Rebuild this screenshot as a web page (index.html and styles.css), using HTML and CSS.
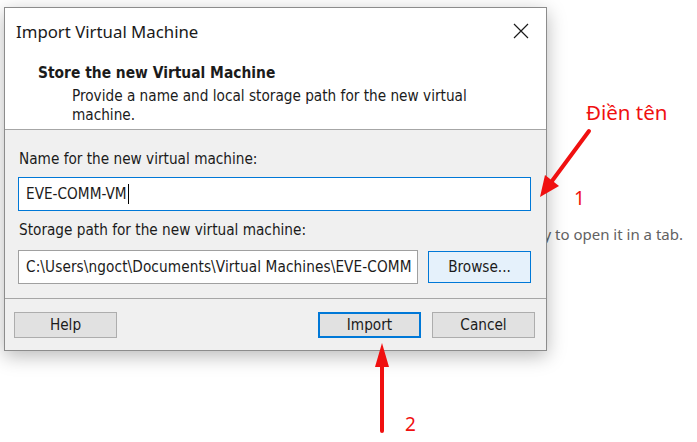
FILE: index.html
```html
<!DOCTYPE html>
<html>
<head>
<meta charset="utf-8">
<link rel="stylesheet" href="styles.css">
</head>
<body>
<div class="page">
  <div class="bg-text">Double-click a file or press Enter key to open it in a tab.</div>
  <div class="dialog">
    <div class="titlebar">
      <span class="title">Import Virtual Machine</span>
      <svg class="close" width="16" height="16" viewBox="0 0 16 16"><path d="M1 1L15 15M15 1L1 15" stroke="#1a1a1a" stroke-width="1.2" fill="none"/></svg>
    </div>
    <div class="header">
      <div class="h-title">Store the new Virtual Machine</div>
      <div class="h-desc">Provide a name and local storage path for the new virtual machine.</div>
    </div>
    <div class="body">
      <div class="label">Name for the new virtual machine:</div>
      <div class="input focused">EVE-COMM-VM<span class="caret"></span></div>
      <div class="label second">Storage path for the new virtual machine:</div>
      <div class="row">
        <div class="input path">C:\Users\ngoct\Documents\Virtual Machines\EVE-COMM</div>
        <div class="btn browse">Browse...</div>
      </div>
    </div>
    <div class="footer">
      <div class="btn">Help</div>
      <div class="spacer"></div>
      <div class="btn primary">Import</div>
      <div class="btn">Cancel</div>
    </div>
  </div>
  <svg class="annot" width="697" height="442" viewBox="0 0 697 442">
    <line x1="589" y1="131" x2="552" y2="181" stroke="#f01010" stroke-width="4" stroke-linecap="round"/>
    <polygon points="540,197 559,186 545,175" fill="#f01010"/>
    <line x1="382" y1="431" x2="382" y2="362" stroke="#f01010" stroke-width="4" stroke-linecap="round"/>
    <polygon points="382,343 389,367 375,367" fill="#f01010"/>
  </svg>
  <span class="note n-label">Điền tên</span>
  <span class="note n-1">1</span>
  <span class="note n-2">2</span>
</div>
</body>
</html>
```

FILE: styles.css
```css
html, body {
  margin: 0;
  padding: 0;
  background: #ffffff;
}
.page {
  position: relative;
  width: 697px;
  height: 442px;
  overflow: hidden;
  padding: 7px 0 0 4px;
  box-sizing: border-box;
  font-family: "DejaVu Sans Condensed", "DejaVu Sans", sans-serif;
  color: #1b1b1b;
}
.bg-text {
  position: absolute;
  right: 14px;
  top: 224px;
  font-family: "Noto Sans", sans-serif;
  font-size: 15px;
  color: #626262;
  white-space: nowrap;
}
.dialog {
  position: relative;
  z-index: 1;
  width: 543px;
  height: 344px;
  box-sizing: border-box;
  border: 1px solid #8c8c8c;
  background: #f0f0f0;
  box-shadow: 0 5px 18px rgba(0, 0, 0, 0.28);
  display: flex;
  flex-direction: column;
}
.titlebar {
  height: 46px;
  background: #fff;
  display: flex;
  align-items: center;
  justify-content: space-between;
  padding: 0 17px 0 11px;
  box-sizing: border-box;
}
.title {
  font-family: "Noto Sans", sans-serif;
  font-size: 16.8px;
  color: #1a1a1a;
}
.close {
  display: block;
}
.header {
  background: #fff;
  padding: 9px 0 4px 33px;
  border-bottom: 1px solid #a6a6a6;
  height: 76px;
  box-sizing: border-box;
}
.h-title {
  font-weight: bold;
  font-size: 15.4px;
  line-height: 20px;
}
.h-desc {
  margin: 4px 0 0 34px;
  font-size: 15.2px;
  line-height: 19px;
  width: 430px;
}
.body {
  padding: 20px 15px 14px 13px;
  border-bottom: 1px solid #a6a6a6;
}
.label {
  font-size: 15.2px;
  line-height: 18px;
  margin-left: 1px;
}
.label.second {
  margin-top: 10px;
}
.input {
  margin-top: 9px;
  height: 34px;
  box-sizing: border-box;
  border: 1px solid #9c9c9c;
  background: #fff;
  font-size: 15.2px;
  line-height: 32px;
  padding: 0 7px;
  white-space: nowrap;
  overflow: hidden;
  display: flex;
  align-items: center;
}
.input.focused {
  border-color: #0078d7;
}
.caret {
  display: inline-block;
  width: 1px;
  height: 20px;
  background: #000;
  margin-left: 1px;
}
.row {
  display: flex;
  align-items: center;
  gap: 10px;
  margin-top: 11px;
}
.row .input {
  margin-top: 0;
}
.input.path {
  width: 400px;
  flex: none;
  border-color: #a0a0a0;
  letter-spacing: 0.1px;
}
.btn {
  width: 103px;
  height: 26px;
  flex: none;
  box-sizing: border-box;
  border: 1px solid #adadad;
  background: #e1e1e1;
  font-size: 15.2px;
  display: flex;
  align-items: center;
  justify-content: center;
  color: #1b1b1b;
}
.btn.browse {
  height: 32px;
  background: #e5f1fb;
  border-color: #0078d7;
}
.btn.primary {
  border: 2px solid #0078d7;
}
.footer {
  display: flex;
  align-items: center;
  gap: 11px;
  padding: 13px 11px 11px 9px;
}
.spacer {
  flex: 1;
}
.annot {
  position: absolute;
  left: 0;
  top: 0;
  z-index: 2;
}
.note {
  position: absolute;
  z-index: 3;
  font-family: "Noto Sans", sans-serif;
  color: #f01010;
  line-height: 1;
}
.n-label {
  left: 586px;
  top: 102px;
  font-size: 20.5px;
}
.n-1 {
  left: 574px;
  top: 189px;
  font-size: 19px;
}
.n-2 {
  left: 405px;
  top: 415px;
  font-size: 19px;
}
```
